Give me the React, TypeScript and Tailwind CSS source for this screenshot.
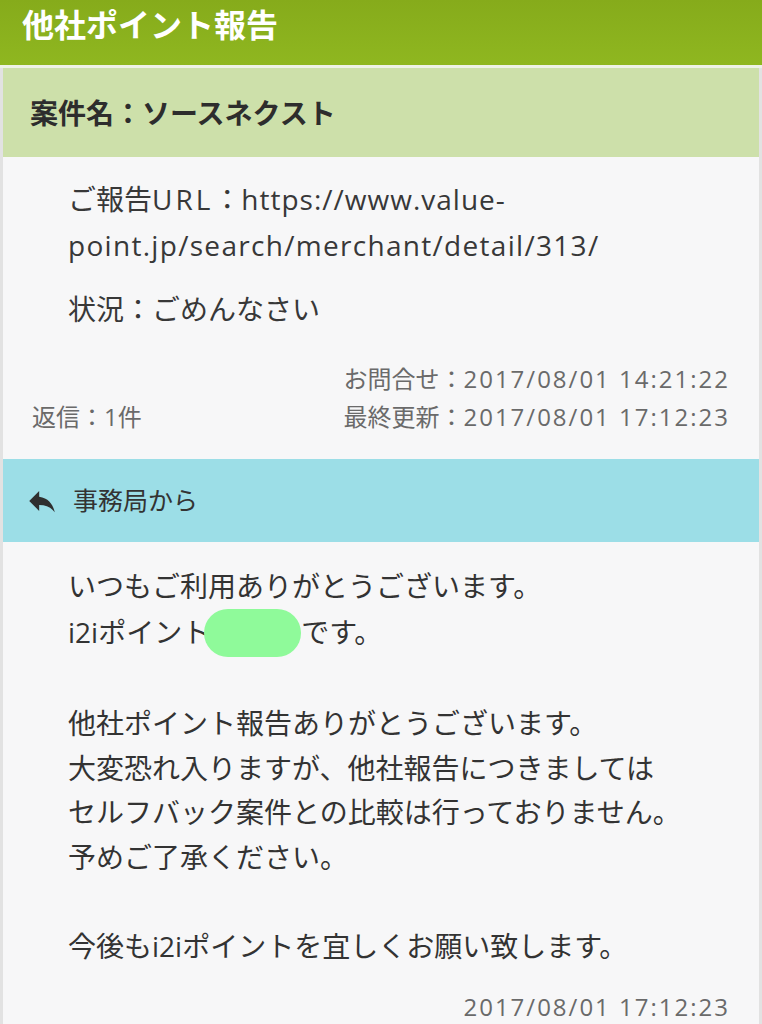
const FONT = { fontFamily: '"Open Sans", "Noto Sans CJK JP", sans-serif' };

const bodyLines: Array<string | null> = [
  'いつもご利用ありがとうございます。',
  '__PILL__',
  null,
  '他社ポイント報告ありがとうございます。',
  '大変恐れ入りますが、他社報告につきましては',
  'セルフバック案件との比較は行っておりません。',
  '予めご了承ください。',
  null,
  '今後もi2iポイントを宜しくお願い致します。',
];

function ReplyIcon() {
  return (
    <svg width="34" height="34" viewBox="0 0 24 24" className="text-[#2f2f2f]">
      <path fill="currentColor" d="M10 9V5l-7 7 7 7v-4.1c5 0 8.5 1.6 11 5.1-1-5-4-10-11-11z" />
    </svg>
  );
}

// latin runs in the reference sit looser than Open Sans does
function Stamp({ children }: { children: string }) {
  return <span className="tracking-[2px]">{children}</span>;
}

export default function App() {
  return (
    <div style={FONT} className="min-h-[1024px] w-[762px] overflow-hidden bg-[#f7f7f8]">
      <header className="h-[65px] bg-gradient-to-b from-[#86ab1b] to-[#8fb720] pl-[22px] pt-[5px]">
        <h1 className="text-[32px] font-bold leading-[40px] text-white">他社ポイント報告</h1>
      </header>
      <div className="h-[3px] bg-[#eef2e6]" />
      <div className="border-x-[3px] border-[#e2e2e2]">
        <div className="flex h-[89px] items-center bg-[#cde0aa] pl-[27px]">
          <h2 className="text-[28px] font-bold text-[#2d2d2d]">案件名：ソースネクスト</h2>
        </div>

        <section className="px-[29px] pb-[21px] pt-[19px] text-[#383838]">
          <div className="pl-[36px] text-[28px] leading-[46px]">
            <p>
              ご報告<span className="tracking-[3px]">URL</span>：<span className="tracking-[1px]">https://www.value-</span>
            </p>
            <p className="tracking-[1.3px]">point.jp/search/merchant/detail/313/</p>
            <p className="mt-[18px]">状況：ごめんなさい</p>
          </div>
          <div className="mt-[28px] flex items-end justify-between text-[24px] leading-[38px] text-[#6a6a6a]">
            <span>返信：1件</span>
            <div className="text-right">
              <p>
                お問合せ：<Stamp>2017/08/01 14:21:22</Stamp>
              </p>
              <p>
                最終更新：<Stamp>2017/08/01 17:12:23</Stamp>
              </p>
            </div>
          </div>
        </section>

        <div className="mt-[2px] flex h-[83px] items-center gap-[14px] bg-[#9cdee7] pl-[22px]">
          <ReplyIcon />
          <span className="text-[25px] text-[#333]">事務局から</span>
        </div>

        <section className="pb-[8px] pl-[65px] pr-[29px] pt-[22px] text-[#333]">
          <div className="text-[28px] leading-[44.5px]">
            {bodyLines.map((line, i) =>
              line === null ? (
                <p key={i} className="h-[44.5px]" />
              ) : line === '__PILL__' ? (
                <p key={i} className="flex items-center">
                  i2iポイント
                  <span className="-ml-[6px] inline-block h-[48px] w-[97px] rounded-full bg-[#8ffa9a]" />
                  です。
                </p>
              ) : (
                <p key={i}>{line}</p>
              ),
            )}
          </div>
          <p className="mt-[20px] text-right text-[24px] leading-[38px] text-[#6a6a6a]">
            <Stamp>2017/08/01 17:12:23</Stamp>
          </p>
        </section>
      </div>
    </div>
  );
}
